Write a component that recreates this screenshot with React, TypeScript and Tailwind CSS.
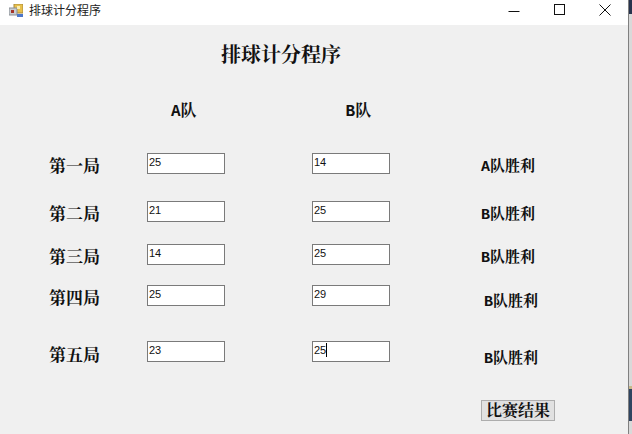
const SERIF = "font-['Liberation_Mono','SimSun','Noto_Serif_CJK_SC','Noto_Sans_CJK_SC',serif]";

const rounds = [
  { name: "第一局", a: "25", b: "14", result: "A队胜利", rowClass: "h-[21px] mt-[35px]", labelClass: "translate-y-[4px]", resultClass: "ml-[91px] translate-y-[4px]" },
  { name: "第二局", a: "21", b: "25", result: "B队胜利", rowClass: "h-[21px] mt-[27px]", labelClass: "translate-y-[4px]", resultClass: "ml-[91px] translate-y-[4px]" },
  { name: "第三局", a: "14", b: "25", result: "B队胜利", rowClass: "h-[21px] mt-[22px]", labelClass: "translate-y-[4px]", resultClass: "ml-[91px] translate-y-[4px]" },
  { name: "第四局", a: "25", b: "29", result: "B队胜利", rowClass: "h-[21px] mt-[20px]", labelClass: "translate-y-[4px]", resultClass: "ml-[94px] translate-y-[7px]" },
  { name: "第五局", a: "23", b: "25", result: "B队胜利", rowClass: "h-[21px] mt-[35px]", labelClass: "translate-y-[5px]", resultClass: "ml-[94px] translate-y-[8px]", caret: true },
];

function ScoreBox({ value, caret }: { value: string; caret?: boolean }) {
  return (
    <div className="flex items-start w-[78px] h-[21px] bg-white border border-[#7a7a7a] pl-px pt-[1px] text-[11px] leading-[14px] text-[#111] font-normal font-['Liberation_Sans',sans-serif]">
      <span>{value}</span>
      {caret && <span className="w-px h-[14px] bg-black" />}
    </div>
  );
}

export default function App() {
  return (
    <div className="w-[632px] h-[434px] flex bg-[#f0f0f0] overflow-hidden">
      <div className="w-[628px] flex flex-col">
        <div className="h-[25px] bg-white flex items-center shrink-0">
          <svg className="ml-[9px] -translate-y-[2px]" width="14" height="14" viewBox="0 0 14 14">
            <rect x="5" y="0" width="9" height="9" fill="#e8c04c" stroke="#a98a3a" strokeWidth="1" />
            <rect x="0" y="4" width="8" height="7" fill="#c9cdd2" stroke="#8a8f95" strokeWidth="1" />
            <rect x="2" y="6" width="3" height="3" fill="#a5352a" />
            <rect x="8" y="10" width="6" height="3" fill="#4d77c9" />
            <rect x="8" y="2" width="3" height="3" fill="#fbeeb0" />
          </svg>
          <span className="ml-[6px] text-[12px] text-[#222] font-['Noto_Sans_CJK_SC',sans-serif] -translate-y-[3px]">排球计分程序</span>
          <div className="ml-auto flex items-center text-black">
            <svg width="12" height="12" viewBox="0 0 12 12" className="mr-[34px] -translate-y-[3px]">
              <path d="M0.5 7.5H11.5" stroke="#111" strokeWidth="1" />
            </svg>
            <svg width="11" height="11" viewBox="0 0 11 11" className="mr-[34px] -translate-y-[3px]">
              <rect x="0.5" y="0.5" width="10" height="10" fill="none" stroke="#111" strokeWidth="1" />
            </svg>
            <svg width="12" height="12" viewBox="0 0 12 12" className="mr-[17px] -translate-y-[3px]">
              <path d="M0.5 0.5L11.5 11.5M11.5 0.5L0.5 11.5" stroke="#111" strokeWidth="1" />
            </svg>
          </div>
        </div>

        <div className={`flex-1 flex flex-col text-[#111] font-bold ${SERIF}`}>
          <div className="h-[20px] mt-[22px] pl-[221px] text-[20px] leading-[20px]">排球计分程序</div>
          <div className="flex h-[16px] mt-[37px] text-[16px] leading-[16px]">
            <span className="ml-[171px]">A队</span>
            <span className="ml-[149px]">B队</span>
          </div>
          <div className="flex flex-col -mt-[2px]">
            {rounds.map((r) => (
              <div key={r.name} className={`flex items-center ${r.rowClass}`}>
                <span className={`ml-[49px] w-[98px] text-[17px] leading-[21px] ${r.labelClass}`}>{r.name}</span>
                <ScoreBox value={r.a} />
                <span className="w-[87px]" />
                <ScoreBox value={r.b} caret={r.caret} />
                <span className={`text-[15px] leading-[21px] whitespace-nowrap ${r.resultClass}`}>{r.result}</span>
              </div>
            ))}
          </div>
          <div className="flex mt-[38px]">
            <button className="ml-[481px] w-[74px] h-[21px] bg-[#e1e1e1] border border-[#adadad] text-[16px] leading-[19px] font-bold">
              <span className="block translate-y-[2px]">比赛结果</span>
            </button>
          </div>
        </div>
      </div>
      <div className="w-px bg-[#808080]" />
      <div className="w-[3px] flex flex-col bg-[#d9d9d9]">
        <div className="h-[14px] bg-[#27334d]" />
        <div className="flex-1" />
        <div className="h-[3px] bg-[#c9b98a]" />
        <div className="h-[32px] bg-[#2f4460]" />
        <div className="h-[13px]" />
      </div>
    </div>
  );
}
